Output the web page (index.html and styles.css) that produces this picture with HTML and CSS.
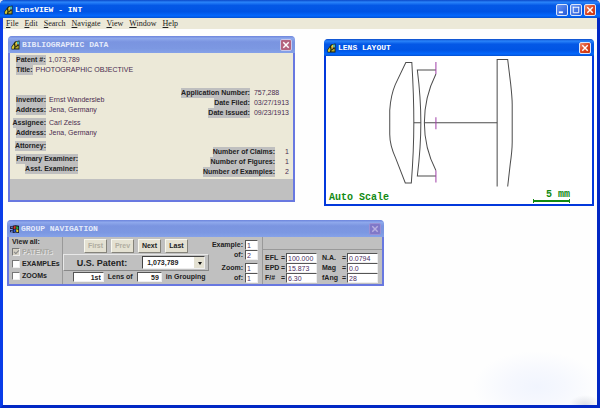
FILE: index.html
```html
<!DOCTYPE html>
<html lang="en">
<head>
<meta charset="utf-8">
<title>LensVIEW - INT</title>
<link rel="stylesheet" href="styles.css">
</head>
<body>
<svg width="0" height="0" class="defs" aria-hidden="true">
  <symbol id="lens-icon" viewBox="0 0 9 10">
    <path d="M0.5 9.5V6.5L4 1.5L8.5 0.5V9.5Z" fill="#1c2410"/>
    <path d="M1 8.7V6.8L3 4.2L3.4 6.4L3 8.7Z" fill="#d8c832"/>
    <path d="M4.2 3L6 1.4V5L4.6 6.6Z" fill="#e8d840"/>
    <path d="M6.2 1.6H7.8V4.4H6.2Z" fill="#50d8e0"/>
    <path d="M4.4 7.4L7.6 5.4V8.6H4.4Z" fill="#b8a828"/>
    <path d="M5.6 3.8L6.8 4.6L5.8 5.8Z" fill="#d04838"/>
  </symbol>
  <symbol id="flag-icon" viewBox="0 0 10 10">
    <path d="M0 2H3V3H1V4H3V5H0V6H3V7H1V8H3V8.5H0Z" fill="#202040"/>
    <path d="M3 1.5Q6 0 10 1.5V9.5Q6 8 3 9.5Z" fill="#101018"/>
    <path d="M4 2.2Q5 1.6 6.2 1.8V4.6Q5 4.5 4 5Z" fill="#e03424"/>
    <path d="M6.9 1.9L9.2 2.4V5.2L6.9 4.7Z" fill="#28b040"/>
    <path d="M4 5.8Q5 5.2 6.2 5.3V8Q5 7.9 4 8.5Z" fill="#2858e0"/>
    <path d="M6.9 5.4L9.2 5.9V8.5L6.9 8Z" fill="#e8d030"/>
  </symbol>
  <symbol id="close-icon" viewBox="0 0 11 11">
    <path d="M2.5 2.5L8.5 8.5M8.5 2.5L2.5 8.5" stroke="currentColor" stroke-width="1.6" fill="none"/>
  </symbol>
</svg>

<div class="app">
  <header class="titlebar app-title">
    <svg class="icon"><use href="#lens-icon"/></svg>
    <h1>LensVIEW - INT</h1>
    <button class="ctl" aria-label="Minimize"><svg viewBox="0 0 11 11"><path d="M2 8H6.5" stroke="#fff" stroke-width="2"/></svg></button>
    <button class="ctl" aria-label="Maximize"><svg viewBox="0 0 11 11"><path d="M2 2.5H9M2.5 2V8.5H8.5V2" stroke="#fff" fill="none"/></svg></button>
    <button class="ctl close" aria-label="Close"><svg><use href="#close-icon"/></svg></button>
  </header>
  <nav class="menu">
    <button><u>F</u>ile</button>
    <button><u>E</u>dit</button>
    <button><u>S</u>earch</button>
    <button><u>N</u>avigate</button>
    <button><u>V</u>iew</button>
    <button><u>W</u>indow</button>
    <button><u>H</u>elp</button>
  </nav>

  <main class="workspace">
    <section class="window inactive biblio">
      <header class="titlebar">
        <svg class="icon"><use href="#lens-icon"/></svg>
        <h2>BIBLIOGRAPHIC DATA</h2>
        <button class="ctl close" aria-label="Close"><svg><use href="#close-icon"/></svg></button>
      </header>
      <div class="record">
        <div class="left">
          <dl class="head">
            <div><dt>Patent #:</dt><dd>1,073,789</dd></div>
            <div><dt>Title:</dt><dd>PHOTOGRAPHIC OBJECTIVE</dd></div>
          </dl>
          <dl>
            <div><dt>Inventor:</dt><dd>Ernst Wandersleb</dd></div>
            <div><dt>Address:</dt><dd>Jena, Germany</dd></div>
          </dl>
          <dl>
            <div><dt>Assignee:</dt><dd>Carl Zeiss</dd></div>
            <div><dt>Address:</dt><dd>Jena, Germany</dd></div>
          </dl>
          <dl>
            <div><dt>Attorney:</dt><dd></dd></div>
          </dl>
          <dl class="wide">
            <div><dt>Primary Examiner:</dt><dd></dd></div>
            <div><dt>Asst. Examiner:</dt><dd></dd></div>
          </dl>
        </div>
        <div class="right">
          <dl class="dates">
            <div><dt>Application Number:</dt><dd>757,288</dd></div>
            <div><dt>Date Filed:</dt><dd>03/27/1913</dd></div>
            <div><dt>Date Issued:</dt><dd>09/23/1913</dd></div>
          </dl>
          <dl class="counts">
            <div><dt>Number of Claims:</dt><dd>1</dd></div>
            <div><dt>Number of Figures:</dt><dd>1</dd></div>
            <div><dt>Number of Examples:</dt><dd>2</dd></div>
          </dl>
        </div>
      </div>
      <footer class="strip"></footer>
    </section>

    <section class="window layout">
      <header class="titlebar">
        <svg class="icon"><use href="#lens-icon"/></svg>
        <h2>LENS LAYOUT</h2>
        <button class="ctl close" aria-label="Close"><svg><use href="#close-icon"/></svg></button>
      </header>
      <svg class="drawing" viewBox="326 56 265 134" role="img" aria-label="Lens cross-section">
        <g fill="none" stroke="#4c4c4c">
          <path d="M405.5 62.500H411.500Q413.500 95 413.500 122.500T411 182.500H405L395.500 158Q389.500 145 389.500 134V110Q390.500 95 395 84.500Z"/>
          <path d="M435.500 70H417Q420.500 98 420.500 122.500T417 175.500H435.500"/>
          <path d="M435.500 74Q424 97 424 122.500T435.500 170"/>
          <path d="M496.500 186V59.500H507L510 84Q511.500 98 511.500 104V142Q511.500 150 509.500 164L507 186"/>
          <path d="M413.500 122.500H420.500M424 122.500H496.500"/>
        </g>
        <path d="M435.500 62V74M435.500 117V129M435.500 170V182" stroke="#a040a8"/>
      </svg>
      <footer class="scale">
        <span>Auto Scale</span>
        <span class="ruler">5 mm</span>
      </footer>
    </section>

    <section class="window inactive group">
      <header class="titlebar">
        <svg class="icon"><use href="#flag-icon"/></svg>
        <h2>GROUP NAVIGATION</h2>
        <button class="ctl close dim" aria-label="Close"><svg><use href="#close-icon"/></svg></button>
      </header>
      <form class="panel">
        <fieldset class="views">
          <legend>View all:</legend>
          <label class="off"><input type="checkbox" checked disabled>PATENTs</label>
          <label><input type="checkbox">EXAMPLEs</label>
          <label><input type="checkbox">ZOOMs</label>
        </fieldset>
        <div class="browse">
          <div class="steps">
            <button type="button" disabled>First</button>
            <button type="button" disabled>Prev</button>
            <button type="button">Next</button>
            <button type="button">Last</button>
          </div>
          <div class="patent">
            <label for="patent">U.S. Patent:</label>
            <span class="combo">
              <select id="patent"><option>1,073,789</option></select>
            </span>
          </div>
          <div class="position">
            <input id="pos" value="1st" aria-label="Lens position">
            <label for="pos">Lens of</label>
            <input id="total" value="59" aria-label="Lens total">
            <label for="total">in Grouping</label>
          </div>
        </div>
        <div class="counters">
          <div class="pair">
            <label for="ex">Example:</label><input id="ex" value="1">
            <label for="exof">of:</label><input id="exof" value="2">
          </div>
          <div class="pair">
            <label for="zm">Zoom:</label><input id="zm" value="1">
            <label for="zmof">of:</label><input id="zmof" value="1">
          </div>
        </div>
        <div class="optics">
          <div class="values">
            <label for="efl">EFL <span>=</span></label><input id="efl" value="100.000">
            <label for="na">N.A. <span>=</span></label><input id="na" value="0.0794">
            <label for="epd">EPD <span>=</span></label><input id="epd" value="15.873">
            <label for="mag">Mag <span>=</span></label><input id="mag" value="0.0">
            <label for="fno">F/# <span>=</span></label><input id="fno" value="6.30">
            <label for="fang">fAng <span>=</span></label><input id="fang" value="28">
          </div>
        </div>
      </form>
    </section>
  </main>
</div>
</body>
</html>
```
FILE: styles.css
```css
* {
  box-sizing: border-box;
}

body {
  margin: 0;
  background: #dfe6f4;
  color: #222;
  font: 7px/10px "Liberation Sans", sans-serif;
}

h1, h2, dl, dd, fieldset, legend {
  margin: 0;
  padding: 0;
  border: 0;
}

button, input, select {
  margin: 0;
  padding: 0;
  border: 0;
  border-radius: 0;
  font: inherit;
  color: inherit;
}

.defs {
  position: absolute;
}

/* Main window */
.app {
  display: flex;
  flex-direction: column;
  min-height: 100vh;
  border: solid #0a36d8;
  border-width: 0 3px 3px;
  border-color: #0a36d8 #0228c4 #0228c4 #0a3ce8;
  border-radius: 5px 5px 0 0;
  background: #fff;
}

.titlebar {
  display: flex;
  align-items: center;
  gap: 2px;
  height: 17px;
  padding: 0 1px 0 2px;
  background: linear-gradient(#0a48c8, #2a84fa 12%, #0458e6 30%, #0054e4 65%, #0468fc 88%, #0450d0);
  color: #fff;
}

.app-title {
  height: 18px;
  margin: 0 -3px;
  padding: 2px 4px 0;
  border-radius: 5px 5px 0 0;
}

.titlebar h1,
.titlebar h2 {
  flex: 1;
  font: bold 8px/10px "Liberation Mono", monospace;
}

.icon {
  width: 9px;
  height: 10px;
}

.ctl {
  display: grid;
  place-items: center;
  width: 12px;
  height: 12px;
  border: 1px solid #dbe6fb;
  border-radius: 2px;
  background: linear-gradient(135deg, #6c98f4, #2458d8);
  color: #fff;
}

.ctl svg {
  width: 10px;
  height: 10px;
}

.close {
  background: linear-gradient(135deg, #f09070, #dc4420 50%, #c83810);
}

.menu {
  display: flex;
  gap: 6px;
  padding: 1px 3px 0;
  background: #ece9d8;
}

.menu button {
  background: none;
  font: 8px/10px "Liberation Serif", serif;
}

.workspace {
  position: relative;
  flex: 1;
  background:
    radial-gradient(ellipse 16px 10px at 582px 376px, #dcdfe6, transparent),
    radial-gradient(ellipse 64px 36px at 534px 358px, #f1f5fe, #f6f8fe 45%, transparent),
    #fefefe;
}

/* Child windows */
.window {
  position: absolute;
  border: solid #0238dc;
  border-width: 0 2px 2px;
  border-radius: 5px 5px 0 0;
  background: #fff;
}

.window .titlebar {
  margin: 0 -2px;
  padding: 1px 3px;
  border-radius: 4px 4px 0 0;
}

.inactive {
  border-color: #6878e0;
}

.inactive .titlebar {
  background: linear-gradient(#6c84dc, #8ea8ec 14%, #7a94e0 35%, #7c98e2 75%, #86a2e8);
  color: #e4eafa;
}

.inactive .ctl {
  border-color: #c8c8ec;
  background: #b4627c;
}

.inactive .dim {
  border-color: #9a90d4;
  background: #8078c8;
  color: #b8b0e0;
}

/* Bibliographic data */
.biblio {
  left: 5px;
  top: 7px;
  width: 287px;
}

.record {
  display: flex;
  justify-content: space-between;
  padding: 2px 4px 2px 2px;
  background: #ece9d8;
}

.record dl > div {
  display: grid;
  grid-template-columns: 34px 1fr;
  gap: 3px;
  height: 10px;
}

.record dt {
  justify-self: end;
  background: #bfbfbf;
  font-weight: bold;
  white-space: nowrap;
}

.record dd {
  color: #4a2c50;
}

.left dl {
  margin-bottom: 3px;
}

.left .head {
  margin: 0 0 20px 4px;
}

.record .head > div {
  display: flex;
}

.record .wide > div {
  grid-template-columns: 66px 1fr;
}

.right {
  display: flex;
  flex-direction: column;
  justify-content: space-between;
  padding-top: 33px;
}

.record .dates > div {
  grid-template-columns: 69px 1fr;
  gap: 4px;
}

.record .counts > div {
  grid-template-columns: 1fr 10px;
  gap: 4px;
}

.counts dd {
  text-align: right;
}

.strip {
  height: 21px;
  background: #c0c0c0;
}

/* Lens layout */
.layout {
  left: 321px;
  top: 10px;
  width: 270px;
}

.drawing {
  display: block;
  width: 100%;
}

.scale {
  display: flex;
  justify-content: space-between;
  align-items: end;
  padding: 0 22px 1px 3px;
  color: #128a12;
  font: bold 10px/10px "Liberation Mono", monospace;
}

.ruler {
  width: 37px;
  line-height: 8px;
  text-align: right;
}

.ruler::after {
  content: "";
  display: block;
  height: 4px;
  border: solid #128a12;
  border-width: 0 1px;
  background: linear-gradient(#128a12, #128a12) center / 100% 2px no-repeat;
}

/* Group navigation */
.group {
  left: 4px;
  top: 191px;
  width: 377px;
}

.panel {
  display: flex;
  background: #c0c0c0;
  font-weight: bold;
}

.panel input:not([type="checkbox"]) {
  width: 100%;
  height: 10px;
  padding: 0 1px;
  border: 1px solid;
  border-color: #555 #eee #eee #555;
  background: #fff;
  line-height: 8px;
}

.views {
  display: flex;
  flex-direction: column;
  gap: 2px;
  width: 53px;
  padding-left: 3px;
}

.views legend {
  height: 10px;
}

.views label {
  display: flex;
  align-items: center;
  gap: 2px;
  height: 10px;
}

.views input {
  appearance: none;
  width: 8px;
  height: 8px;
  border: 1px solid;
  border-color: #777 #eee #eee #777;
  background: #fff;
}

.views .off {
  color: #a6a6a0;
  text-shadow: 1px 1px #e4e4e4;
}

.views .off input {
  background: #d4d0c4;
}

.views .off input::after {
  content: "";
  display: block;
  width: 2px;
  height: 4px;
  margin: 0 2px;
  border: solid #888;
  border-width: 0 1px 1px 0;
  transform: rotate(45deg);
}

.browse {
  width: 148px;
  border-left: 1px solid #999;
}

.steps {
  display: flex;
  justify-content: center;
  gap: 4px;
  padding: 2px 0 1px;
}

.steps button {
  width: 23px;
  height: 14px;
  border: 1px solid;
  border-color: #f8f8f0 #85837a #85837a #f8f8f0;
  background: #e4e1d2;
}

.steps button:disabled {
  color: #b0ada0;
}

.patent {
  display: flex;
  justify-content: space-between;
  align-items: center;
  height: 17px;
  padding: 0 3px 0 13px;
  border: 1px solid;
  border-color: #e8e8e8 #888 #888 #e8e8e8;
  font-size: 9px;
}

.combo {
  position: relative;
  width: 63px;
}

.combo::after {
  content: "";
  position: absolute;
  right: 3px;
  top: 6px;
  border: 2px solid transparent;
  border-top: 3px solid #111;
  pointer-events: none;
}

.combo select {
  display: block;
  appearance: none;
  width: 100%;
  height: 13px;
  padding: 0 4px;
  border: 1px solid;
  border-color: #444 #eee #eee #444;
  background: linear-gradient(#e4e1d2, #e4e1d2) right / 10px 100% no-repeat, #fff;
  font-size: 7px;
}

.position {
  display: grid;
  grid-template-columns: 31px 25px 25px 40px;
  gap: 4px;
  padding: 1px 0 1px 10px;
}

.panel .position input {
  padding-right: 2px;
  text-align: right;
}

.position label,
.counters label {
  white-space: nowrap;
}

.counters {
  display: flex;
  flex-direction: column;
  justify-content: space-between;
  width: 54px;
  padding: 3px 4px 1px 0;
  border-right: 1px solid #999;
}

.pair {
  display: grid;
  grid-template-columns: 1fr 13px;
  column-gap: 2px;
  text-align: right;
}

.counters input,
.optics input {
  color: #4a2c60;
  font-weight: normal;
}

.optics {
  flex: 1;
  padding-top: 12px;
}

.values {
  display: grid;
  grid-template-columns: 20px 31px 28px 31px;
  column-gap: 1px;
  padding: 3px 4px 1px 2px;
  border-top: 1px solid #999;
}

.values label {
  display: flex;
  justify-content: space-between;
  white-space: nowrap;
}

.values label:nth-of-type(even) {
  padding-left: 4px;
}
```
